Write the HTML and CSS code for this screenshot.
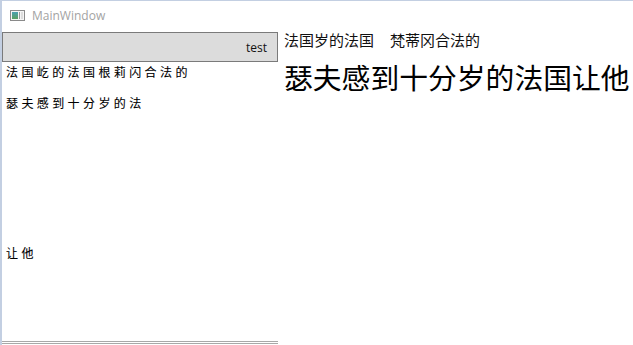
FILE: index.html
```html
<!DOCTYPE html>
<html lang="zh">
<head>
<meta charset="utf-8">
<title>MainWindow</title>
<link rel="stylesheet" href="styles.css">
</head>
<body>
<div class="window">
  <div class="titlebar">
    <svg class="app-icon" width="15" height="11" viewBox="0 0 15 11">
      <defs>
        <linearGradient id="g" x1="0" y1="0" x2="0" y2="1">
          <stop offset="0" stop-color="#4aa0b0"/>
          <stop offset="1" stop-color="#5aa060"/>
        </linearGradient>
      </defs>
      <rect x="0.5" y="0.5" width="14" height="10" fill="#f4f4f4" stroke="#8a8a8a"/>
      <rect x="2" y="2" width="6" height="7" fill="url(#g)"/>
      <rect x="9" y="2" width="1" height="7" fill="#9a9a9a"/>
      <rect x="11" y="2" width="2" height="7" fill="#dcdcdc"/>
    </svg>
    <span class="title">MainWindow</span>
  </div>
  <div class="main">
    <div class="left">
      <div class="header"><span>test</span></div>
      <div class="list">
        <div class="row r1">法国屹的法国根莉闪合法的</div>
        <div class="row r2">瑟夫感到十分岁的法</div>
        <div class="row r3">让他</div>
      </div>
      <div class="footer"></div>
    </div>
    <div class="right">
      <div class="small">法国岁的法国<span class="gap">梵蒂冈合法的</span></div>
      <div class="big">瑟夫感到十分岁的法国让他</div>
    </div>
  </div>
</div>
</body>
</html>
```
FILE: styles.css
```css
html, body {
  margin: 0;
  padding: 0;
  background: #ffffff;
}
.window {
  width: 633px;
  height: 345px;
  box-sizing: border-box;
  border-top: 1px solid #c3cfe2;
  border-left: 2px solid #c3cfe2;
  display: flex;
  flex-direction: column;
  overflow: hidden;
}
.titlebar {
  height: 31px;
  display: flex;
  align-items: center;
  padding-left: 8px;
  box-sizing: border-box;
  padding-bottom: 2px;
}
.app-icon {
  display: block;
}
.title {
  margin-left: 7px;
  font-family: "Open Sans", "Liberation Sans", sans-serif;
  font-size: 12px;
  color: #a3a3a3;
}
.main {
  flex: 1;
  display: flex;
}
.left {
  width: 276px;
  display: flex;
  flex-direction: column;
}
.header {
  height: 30px;
  box-sizing: border-box;
  background: #dcdcdc;
  border: 1px solid #7a7a7a;
  display: flex;
  align-items: center;
  justify-content: flex-end;
  padding-right: 10px;
  font-family: "Open Sans", "Liberation Sans", sans-serif;
  font-size: 12px;
  color: #111;
}
.list {
  flex: 1;
  padding: 2px 0 0 4px;
  font-family: "Noto Sans CJK SC", sans-serif;
  font-size: 12px;
  line-height: 16px;
  letter-spacing: 3.4px;
  color: #000;
  -webkit-text-stroke: 0.1px #000;
}
.row.r2 {
  margin-top: 15px;
}
.row.r3 {
  margin-top: 134px;
}
.footer {
  height: 1px;
  border-top: 1px solid #a8a8a8;
  border-bottom: 1px solid #a8a8a8;
  margin-bottom: 1px;
}
.right {
  flex: 1;
  padding-left: 6px;
  font-family: "Noto Sans CJK SC", sans-serif;
  color: #111;
  white-space: nowrap;
}
.small {
  margin-top: -2px;
  font-size: 15px;
  line-height: 20px;
}
.gap {
  margin-left: 16px;
}
.big {
  margin-top: 10px;
  font-size: 28.8px;
  line-height: 34px;
  color: #000;
}
```
